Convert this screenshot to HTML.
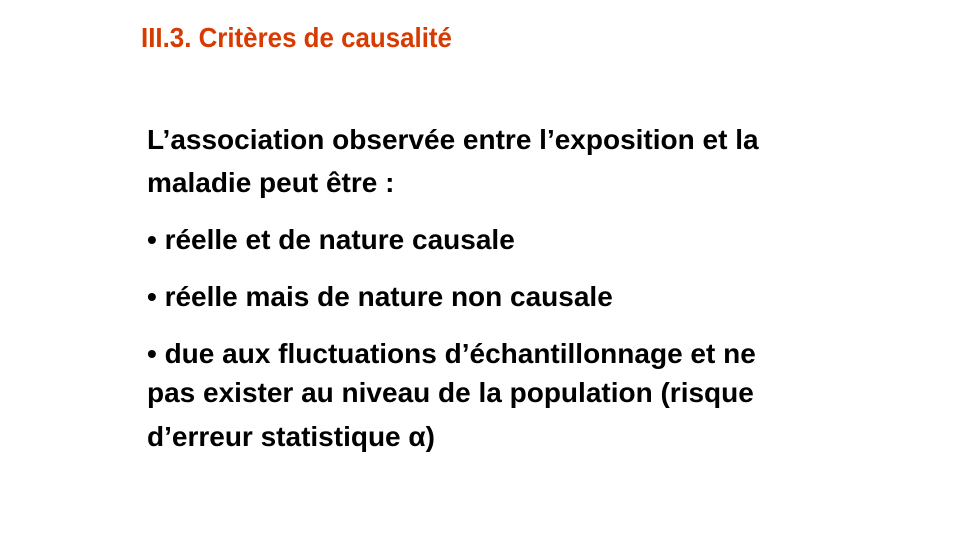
<!DOCTYPE html>
<html><head><meta charset="utf-8"><style>
body{margin:0;width:960px;height:540px;background:#fff;position:relative;overflow:hidden;font-family:"Liberation Sans",Arial,sans-serif;font-weight:bold}
.t{position:absolute;left:141px;top:22px;font-size:28px;color:#d83b01;white-space:nowrap;transform:scaleX(0.925);transform-origin:0 0}
.l{position:absolute;left:147px;font-size:28px;color:#000;white-space:nowrap;transform:scaleX(1.0);transform-origin:0 0}
</style></head><body>
<div class="t">III.3. Critères de causalité</div>
<div class="l" style="top:124px">L’association observée entre l’exposition et la</div>
<div class="l" style="top:167px">maladie peut être :</div>
<div class="l" style="top:224px">• réelle et de nature causale</div>
<div class="l" style="top:281px">• réelle mais de nature non causale</div>
<div class="l" style="top:338px">• due aux fluctuations d’échantillonnage et ne</div>
<div class="l" style="top:377px">pas exister au niveau de la population (risque</div>
<div class="l" style="top:421px">d’erreur statistique α)</div>
</body></html>
